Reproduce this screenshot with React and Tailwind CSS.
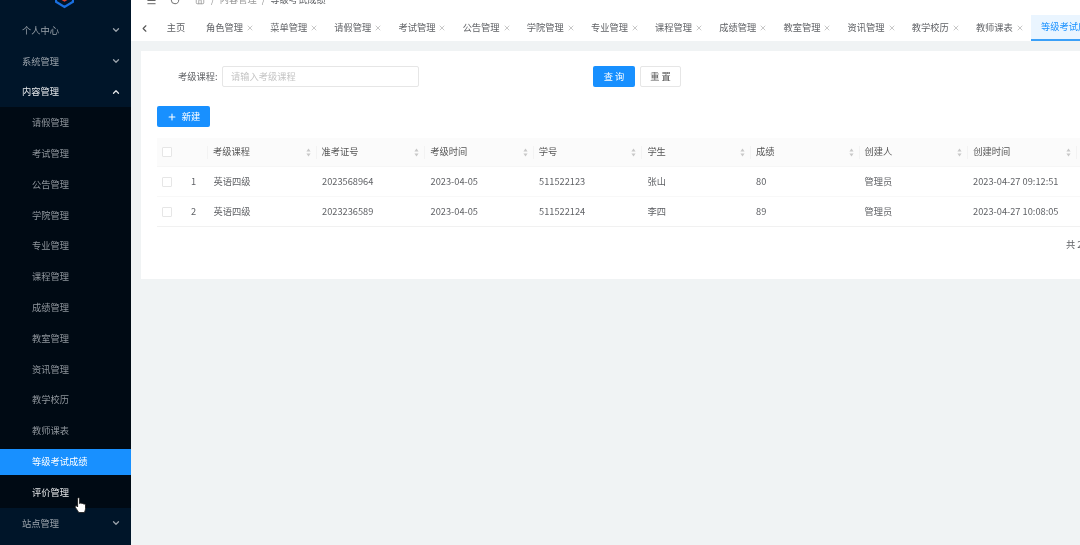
import React from 'react';
import { ChevronDown, ChevronUp, ChevronLeft, X, Plus, Menu, RotateCw, Home } from 'lucide-react';

const sideItems = ['请假管理','考试管理','公告管理','学院管理','专业管理','课程管理','成绩管理','教室管理','资讯管理','教学校历','教师课表','等级考试成绩','评价管理'];
const tabs = ['角色管理','菜单管理','请假管理','考试管理','公告管理','学院管理','专业管理','课程管理','成绩管理','教室管理','资讯管理','教学校历','教师课表'];
const cols = ['考级课程','准考证号','考级时间','学号','学生','成绩','创建人','创建时间'];
const rows = [
  ['英语四级','2023568964','2023-04-05','511522123','张山','80','管理员','2023-04-27 09:12:51'],
  ['英语四级','2023236589','2023-04-05','511522124','李四','89','管理员','2023-04-27 10:08:05'],
];

function Group({ label, open, bright }) {
  const Icon = open ? ChevronUp : ChevronDown;
  return (
    <div className={`h-[30.8px] flex items-center justify-between pl-[22px] pr-[10px] ${bright ? 'text-[#e4e7ea]' : 'text-[#9aa3ab]'}`}>
      <span>{label}</span>
      <Icon size={10} strokeWidth={3} />
    </div>
  );
}

function Sort() {
  return (
    <svg width="5" height="9" viewBox="0 0 5 9" className="shrink-0">
      <path d="M2.5 0.5 L4.6 3.6 H0.4 Z M2.5 8.5 L4.6 5.4 H0.4 Z" fill="#c8c8c8" />
    </svg>
  );
}

function Box() {
  return <div className="w-[10px] h-[10px] border border-[#e6e6e6] bg-white rounded-[1px]" />;
}

export default function App() {
  return (
    <div className="relative w-[1080px] h-[545px] overflow-hidden flex bg-[#f0f3f4] text-[9.25px] leading-none text-[#606266] blur-[0.5px] font-['Noto_Sans_CJK_SC','Noto_Sans',sans-serif]">
      <aside className="w-[131px] shrink-0 bg-[#001529] flex flex-col">
        <div className="h-[15px] flex justify-center overflow-hidden">
          <svg width="19" height="24" viewBox="0 0 20 24" className="-mt-[15px] ml-[-3px] shrink-0">
            <path d="M10 1 L19 6 V17 L10 22.5 L1 17 V6 Z" fill="none" stroke="#1a6fe0" strokeWidth="2.4" />
            <path d="M5 14 L10 17 L15 14 L15 10.5 L10 13 L5 10.5 Z" fill="#e2402f" />
          </svg>
        </div>
        <Group label="个人中心" />
        <Group label="系统管理" />
        <Group label="内容管理" open bright />
        <div className="bg-[#000a14] flex flex-col">
          {sideItems.map((s) => {
            const active = s === '等级考试成绩';
            const hover = s === '评价管理';
            return (
              <div key={s} className="h-[30.8px] flex items-center">
                <div className={`w-full h-[26px] flex items-center pl-[32px] ${active ? 'bg-[#1890ff] text-white' : hover ? 'text-[#e6e8ea]' : 'text-[#8f969d]'}`}>{s}</div>
              </div>
            );
          })}
        </div>
        <Group label="站点管理" />
      </aside>

      <main className="flex-1 min-w-0 flex flex-col">
        <header className="h-[30px] -mt-[15px] shrink-0 bg-white flex items-center pl-[15px] text-[#9a9a9a]">
          <Menu size={11} className="text-[#555]" />
          <RotateCw size={10} className="ml-[13px] text-[#555]" />
          <Home size={10} className="ml-[15px]" />
          <span className="ml-[6px]">/</span>
          <span className="ml-[5px]">内容管理</span>
          <span className="ml-[5px]">/</span>
          <span className="ml-[5px] text-[#606266]">等级考试成绩</span>
        </header>

        <nav className="h-[26px] shrink-0 bg-white flex items-stretch overflow-hidden">
          <div className="w-[26px] shrink-0 flex items-center justify-center text-[#555]"><ChevronLeft size={11} strokeWidth={2.5} /></div>
          <div className="w-[38px] shrink-0 flex items-center justify-center">主页</div>
          <div className="w-[2px] shrink-0" />
          {tabs.map((t) => (
            <div key={t} className="w-[64.17px] shrink-0 flex items-center pl-[9px]">
              <span>{t}</span>
              <X size={8} className="ml-[3px] text-[#aaa]" />
            </div>
          ))}
          <div className="w-[100px] shrink-0 flex items-center pl-[10px] bg-[#eaf5ff] text-[#1890ff] border-b-2 border-[#3ba0f8]">等级考试成绩</div>
        </nav>

        <section className="mt-[10px] ml-[10px] h-[228px] shrink-0 bg-white flex flex-col overflow-hidden">
          <div className="mt-[15px] h-[21px] flex items-center shrink-0">
            <span className="ml-[37px] w-[40px]">考级课程:</span>
            <div className="ml-[4px] w-[197px] h-[21px] border border-[#e6e6e6] rounded-[2px] flex items-center pl-[8px] text-[#c4c4c4]">请输入考级课程</div>
            <button className="ml-[174px] w-[42px] h-[21px] bg-[#1890ff] text-white rounded-[2px] flex items-center justify-center">查 询</button>
            <button className="ml-[5px] w-[41px] h-[21px] border border-[#e6e6e6] rounded-[2px] text-[#555] flex items-center justify-center">重 置</button>
          </div>

          <button className="mt-[19px] ml-[16px] w-[53px] h-[21px] shrink-0 bg-[#1890ff] text-white rounded-[2px] flex items-center justify-center gap-[5px]">
            <Plus size={10} strokeWidth={2.5} />
            <span>新建</span>
          </button>

          <div className="mt-[11px] ml-[16px] flex flex-col shrink-0 w-[1100px]">
            <div className="h-[29px] bg-[#fbfbfb] flex items-center border-b border-[#f6f6f6]">
              <div className="w-[23px] pl-[5px] shrink-0"><Box /></div>
              <div className="w-[27px] shrink-0" />
              {cols.map((c) => (
                <div key={c} className="w-[108.6px] h-[13px] shrink-0 flex items-center justify-between pl-[5px] pr-[5px] border-l border-[#f3f3f3] text-[#555]">
                  <span>{c}</span>
                  <Sort />
                </div>
              ))}
              <div className="h-[13px] border-l border-[#f3f3f3]" />
            </div>
            {rows.map((r, i) => (
              <div key={i} className={`h-[30px] flex items-center border-b ${i === 0 ? 'border-[#f8f8f8]' : 'border-[#f1f1f1]'}`}>
                <div className="w-[23px] pl-[5px] shrink-0"><Box /></div>
                <div className="w-[28px] pl-[11px] shrink-0">{i + 1}</div>
                {r.map((v, j) => (
                  <div key={j} className="w-[108.5px] shrink-0 pl-[5.5px]">{v}</div>
                ))}
              </div>
            ))}
          </div>

          <div className="mt-[13px] ml-[925px] whitespace-nowrap">共 2 条</div>
        </section>
      </main>

      <svg width="13" height="17" viewBox="0 0 13 17" className="absolute left-[74px] top-[497px]">
        <path d="M3.6 1.6 C3.6 0.4 5.6 0.4 5.6 1.6 V6.6 L6 6.4 C6.6 5.8 7.6 6 7.8 6.6 C8.4 6.2 9.4 6.4 9.6 7.1 C10.2 6.8 11.4 7 11.5 8 V11.5 C11.5 13.5 10.5 14.6 10.5 15.6 H4.6 C4.4 14.2 2.6 12.6 1.4 10.4 C0.8 9.2 2 8.2 3 9.2 L3.6 10 Z" fill="#ffffff" stroke="#1a1a1a" strokeWidth="0.9" strokeLinejoin="round" />
      </svg>
    </div>
  );
}
